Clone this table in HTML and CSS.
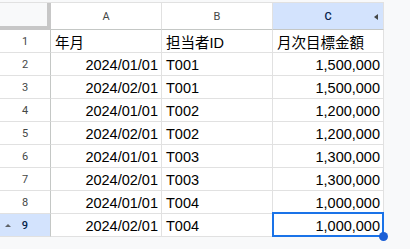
FILE: index.html
```html
<!DOCTYPE html>
<html lang="ja">
<head>
    <meta charset="UTF-8">
    <meta name="viewport" content="width=device-width, initial-scale=1.0">
    <title>月次目標</title>
    <link rel="stylesheet" href="styles.css">
</head>
<body>
    <div class="sheet">
        <!-- column headers -->
        <div class="corner"></div>
        <div class="col-head">A</div>
        <div class="col-head">B</div>
        <div class="col-head selected">C<span class="col-menu"></span></div>

        <div class="row-head">1</div>
        <div class="cell">年月</div>
        <div class="cell">担当者ID</div>
        <div class="cell">月次目標金額</div>

        <div class="row-head">2</div>
        <div class="cell num">2024/01/01</div>
        <div class="cell">T001</div>
        <div class="cell num">1,500,000</div>

        <div class="row-head">3</div>
        <div class="cell num">2024/02/01</div>
        <div class="cell">T001</div>
        <div class="cell num">1,500,000</div>

        <div class="row-head">4</div>
        <div class="cell num">2024/01/01</div>
        <div class="cell">T002</div>
        <div class="cell num">1,200,000</div>

        <div class="row-head">5</div>
        <div class="cell num">2024/02/01</div>
        <div class="cell">T002</div>
        <div class="cell num">1,200,000</div>

        <div class="row-head">6</div>
        <div class="cell num">2024/01/01</div>
        <div class="cell">T003</div>
        <div class="cell num">1,300,000</div>

        <div class="row-head">7</div>
        <div class="cell num">2024/02/01</div>
        <div class="cell">T003</div>
        <div class="cell num">1,300,000</div>

        <div class="row-head">8</div>
        <div class="cell num">2024/01/01</div>
        <div class="cell">T004</div>
        <div class="cell num">1,000,000</div>

        <div class="row-head selected"><span class="row-toggle"></span>9</div>
        <div class="cell num">2024/02/01</div>
        <div class="cell">T004</div>
        <div class="cell num active">1,000,000</div>
    </div>
</body>
</html>
```

FILE: styles.css
```css
body {
    margin: 0;
    min-height: 249px;
    background-color: #f8f9fa;
    font-family: "Liberation Sans", Arial, "Noto Sans CJK JP", sans-serif;
}
.sheet {
    display: grid;
    grid-template-columns: 51px 111px 111px 111px;
    grid-template-rows: 27px;
    grid-auto-rows: 23px;
    width: 384px;
    margin-top: 2px;
    border-top: 1px solid #e1e1e1;
}
.corner {
    background-color: #f8f9fa;
    border-right: 4px solid #c7c7c7;
    border-bottom: 4px solid #c7c7c7;
}
.col-head, .row-head {
    display: flex;
    align-items: center;
    justify-content: center;
    font-family: Roboto, "Liberation Sans", sans-serif;
    font-size: 11px;
    color: #444746;
    background-color: #fff;
    box-sizing: border-box;
}
.col-head {
    position: relative;
    border-right: 1px solid #e1e1e1;
    border-bottom: 1px solid #c4c7c5;
}
.row-head {
    position: relative;
    border-right: 1px solid #c4c7c5;
    border-bottom: 1px solid #e1e1e1;
}
.col-head.selected, .row-head.selected {
    background-color: #d3e3fd;
    color: #041e49;
    font-weight: 500;
}
.col-menu {
    position: absolute;
    right: 5px;
    top: 11px;
    border-top: 3px solid transparent;
    border-bottom: 3px solid transparent;
    border-right: 4px solid #444746;
}
.row-toggle {
    position: absolute;
    left: 5px;
    top: 10px;
    border-left: 3px solid transparent;
    border-right: 3px solid transparent;
    border-bottom: 3px solid #5f6368;
}
.cell {
    position: relative;
    display: flex;
    align-items: center;
    padding: 1px 3px 0 4px;
    font-size: 14.5px;
    color: #000;
    background-color: #fff;
    border-right: 1px solid #e1e1e1;
    border-bottom: 1px solid #e1e1e1;
    white-space: nowrap;
}
.cell.num {
    justify-content: flex-end;
}
/* selection box */
.cell.active::before {
    content: "";
    position: absolute;
    top: -2px;
    left: -1px;
    right: -1px;
    bottom: -1px;
    border: 2px solid #1a73e8;
}
/* fill handle */
.cell.active::after {
    content: "";
    position: absolute;
    right: -5px;
    bottom: -5px;
    width: 9px;
    height: 9px;
    border-radius: 50%;
    background-color: #1a5fd6;
    z-index: 2;
}
```
